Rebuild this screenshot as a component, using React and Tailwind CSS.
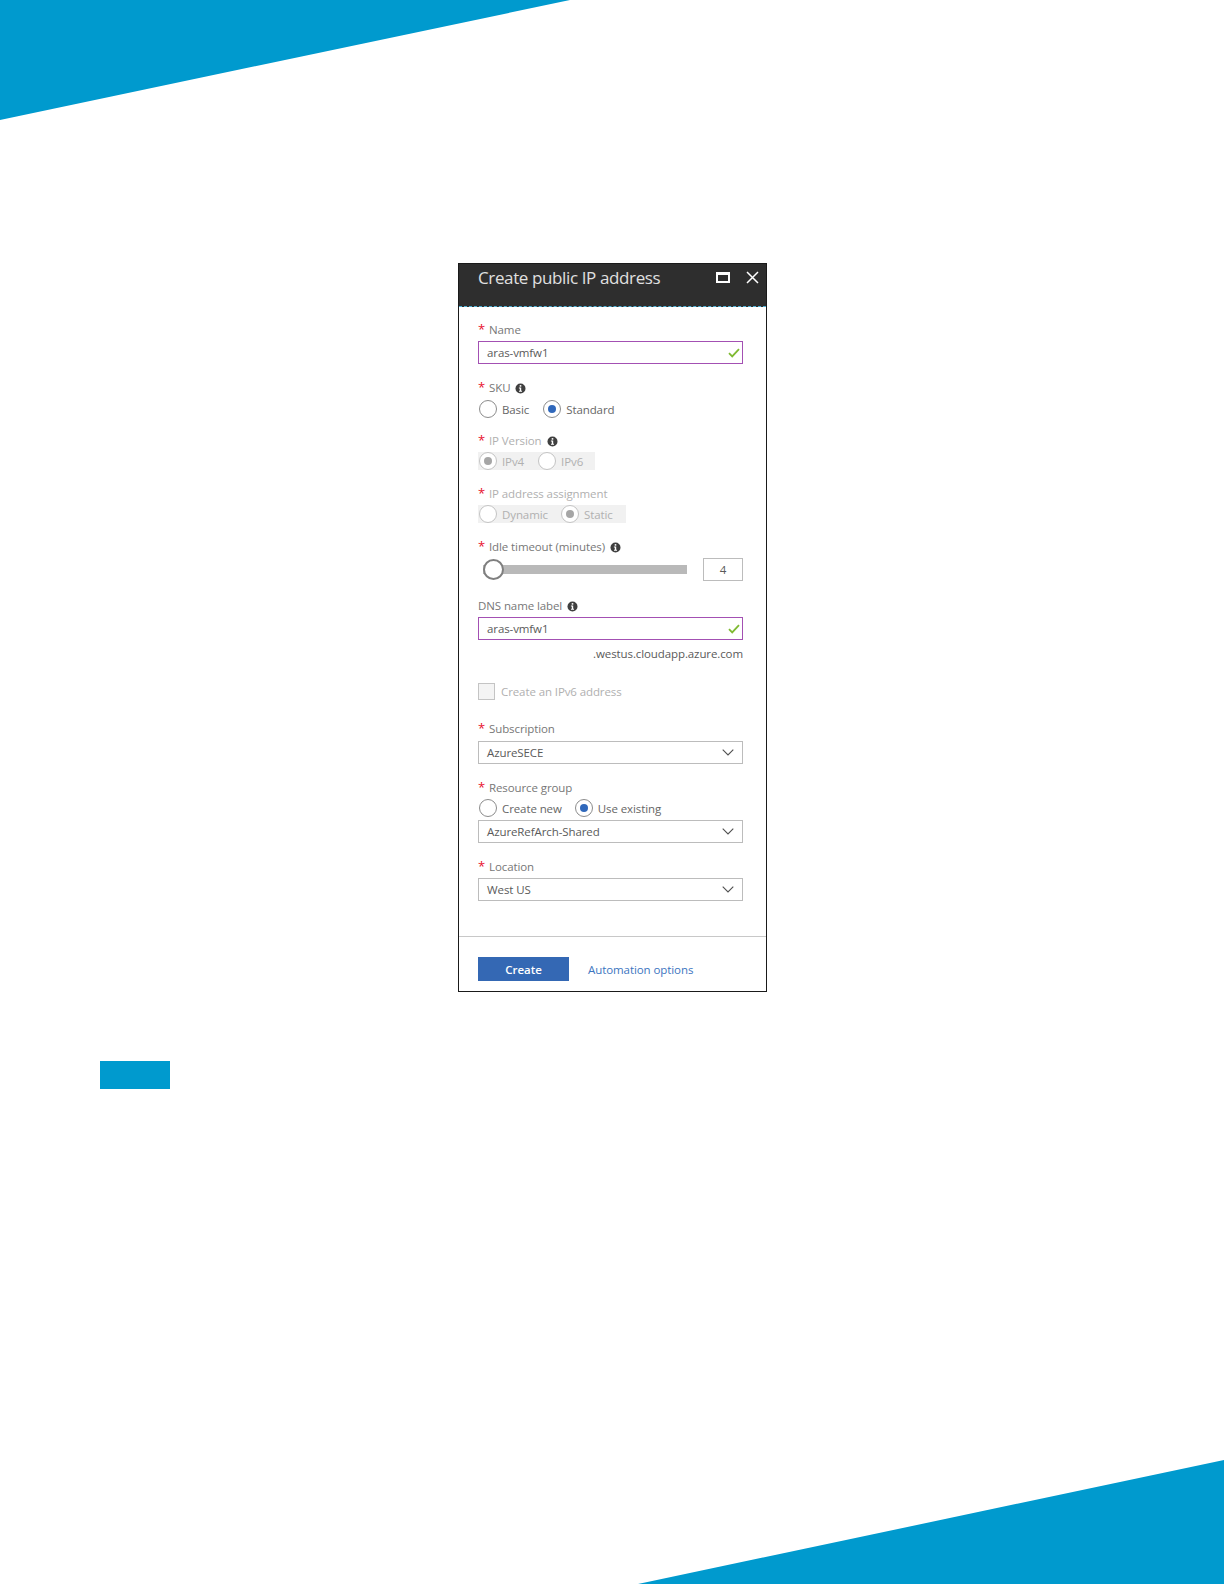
const font = { fontFamily: '"Open Sans", "Noto Sans", sans-serif' };

function Info({ className = "" }) {
  return (
    <svg width="11" height="11" viewBox="0 0 11 11" className={`shrink-0 ${className}`}>
      <circle cx="5.5" cy="5.5" r="5" fill="#3f3f3f" />
      <rect x="4.7" y="2.1" width="1.6" height="1.6" fill="#fff" />
      <path d="M3.9 4.6H6.2V7.8H7V8.8H4V7.8H4.8V5.6H3.9Z" fill="#fff" />
    </svg>
  );
}

function Label({ text, required = true, info = false, disabled = false }) {
  return (
    <div className={`flex h-4 items-center text-[11.5px] leading-4 ${disabled ? "text-[#b0b0b0]" : "text-[#777777]"}`}>
      {required && <span className="relative -top-[1px] w-[11px] text-[13px] leading-4 text-[#e8112d]">*</span>}
      <span className="tracking-[-0.1px]">{text}</span>
      {info && <Info className="ml-[5px]" />}
    </div>
  );
}

function Radio({ checked, disabled }) {
  const dot = disabled ? "bg-[#a6a6a6]" : "bg-[#3068bb]";
  return (
    <span className={`flex h-[18px] w-[18px] shrink-0 items-center justify-center rounded-full border bg-white ${disabled ? "border-[#c4c4c4]" : "border-[#8c8c8c]"}`}>
      {checked && <span className={`h-[8px] w-[8px] rounded-full ${dot}`} />}
    </span>
  );
}

function Option({ label, checked, disabled, className = "" }) {
  return (
    <div className={`flex items-center gap-[5px] text-[11.5px] ${disabled ? "text-[#b0b0b0]" : "text-[#666666]"} ${className}`}>
      <Radio checked={checked} disabled={disabled} />
      <span className="relative top-px tracking-[-0.1px]">{label}</span>
    </div>
  );
}

function Check() {
  return (
    <svg width="12" height="10" viewBox="0 0 12 10" className="shrink-0">
      <path d="M1 5.2L4.2 8.4L11 1.2" fill="none" stroke="#7fba32" strokeWidth="1.8" />
    </svg>
  );
}

function ValidInput({ value, className = "" }) {
  return (
    <div className={`flex h-[23px] w-[265px] items-center justify-between border border-[#a350b3] pl-2 pr-[2px] text-[11.5px] text-[#5a5a5a] ${className}`}>
      <span className="tracking-[-0.1px]">{value}</span>
      <Check />
    </div>
  );
}

function Select({ value, className = "" }) {
  return (
    <div className={`flex h-[23px] w-[265px] items-center justify-between border border-[#bcbcbc] pl-2 pr-[8px] text-[11.5px] text-[#5a5a5a] ${className}`}>
      <span className="tracking-[-0.1px]">{value}</span>
      <svg width="12" height="7" viewBox="0 0 12 7">
        <path d="M0.7 0.7L6 6L11.3 0.7" fill="none" stroke="#505050" strokeWidth="1.1" />
      </svg>
    </div>
  );
}

export default function App() {
  return (
    <div className="relative h-[1584px] w-[1224px] overflow-hidden bg-white" style={font}>
      <div className="absolute left-0 top-0 h-[120px] w-[570px] bg-[#009ace] [clip-path:polygon(0_0,100%_0,0_100%)]" />
      <div className="absolute bottom-0 right-0 h-[124px] w-[586px] bg-[#009ace] [clip-path:polygon(100%_0,100%_100%,0_100%)]" />

      <div className="pl-[458px] pt-[263px]">
        <div className="flex w-[309px] flex-col border border-[#1a1a1a] bg-white">
          <div className="flex h-[43px] items-start justify-between border-b border-dashed border-b-[#4fb3d9] bg-[#2e2e2e] pl-[19px] pr-[7px]">
            <span className="mt-[2px] text-[17px] leading-6 tracking-[-0.38px] text-[#e0e0e0]">Create public IP address</span>
            <div className="mt-[7px] flex items-center gap-[16px]">
              <span className="h-[11px] w-[14px] border-[2px] border-t-[3px] border-white" />
              <svg width="13" height="13" viewBox="0 0 13 13">
                <path d="M1 1L12 12M12 1L1 12" stroke="#fff" strokeWidth="1.5" />
              </svg>
            </div>
          </div>

          <div className="flex flex-col px-[19px] pt-[15px]">
            <Label text="Name" />
            <ValidInput value="aras-vmfw1" className="mt-[3px]" />

            <div className="mt-[16px]"><Label text="SKU" info /></div>
            <div className="mt-[3px] flex h-[19px] items-center pl-px">
              <Option label="Basic" />
              <Option label="Standard" checked className="ml-[14px]" />
            </div>

            <div className="mt-[15px]"><Label text="IP Version" info disabled /></div>
            <div className="mt-[3px] flex h-[18px] w-[117px] items-center bg-[#f1f1f1] pl-px">
              <Option label="IPv4" checked disabled />
              <Option label="IPv6" disabled className="ml-[14px]" />
            </div>

            <div className="mt-[16px]"><Label text="IP address assignment" disabled /></div>
            <div className="mt-[3px] flex h-[18px] w-[148px] items-center bg-[#f1f1f1] pl-px">
              <Option label="Dynamic" disabled />
              <Option label="Static" checked disabled className="ml-[13px]" />
            </div>

            <div className="mt-[16px]"><Label text="Idle timeout (minutes)" info /></div>
            <div className="mt-[3px] flex h-[23px] items-center">
              <div className="relative ml-[5px] h-[9px] w-[204px] bg-[#b9b9b9]">
                <span className="absolute -top-[6px] left-0 h-[21px] w-[21px] rounded-full border-2 border-[#7f7f7f] bg-white" />
              </div>
              <div className="ml-[16px] flex h-[23px] w-10 items-center justify-center border border-[#bcbcbc] text-[11.5px] text-[#5a5a5a]">4</div>
            </div>

            <div className="mt-[17px]"><Label text="DNS name label" required={false} info /></div>
            <ValidInput value="aras-vmfw1" className="mt-[3px]" />
            <div className="mt-[6px] h-4 w-[265px] text-right text-[11.5px] leading-4 tracking-[-0.1px] text-[#5a5a5a]">.westus.cloudapp.azure.com</div>

            <div className="mt-[21px] flex h-[17px] items-center gap-[6px] text-[11.5px] text-[#b0b0b0]">
              <span className="h-[17px] w-[17px] border border-[#c4c4c4] bg-[#f4f4f4]" />
              <span className="tracking-[-0.1px]">Create an IPv6 address</span>
            </div>

            <div className="mt-[21px]"><Label text="Subscription" /></div>
            <Select value="AzureSECE" className="mt-[4px]" />

            <div className="mt-[16px]"><Label text="Resource group" /></div>
            <div className="mt-[2px] flex h-5 items-center pl-px">
              <Option label="Create new" />
              <Option label="Use existing" checked className="ml-[13px]" />
            </div>
            <Select value="AzureRefArch-Shared" className="mt-[2px]" />

            <div className="mt-[16px]"><Label text="Location" /></div>
            <Select value="West US" className="mt-[3px]" />
          </div>

          <div className="mt-[35px] border-t border-[#c8c8c8] px-[19px] pb-[10px] pt-[20px]">
            <div className="flex items-center">
              <div className="flex h-[24px] w-[91px] items-center justify-center bg-[#3468b4] pt-px text-[11.5px] font-semibold text-white">Create</div>
              <span className="relative top-px ml-[19px] text-[11.5px] tracking-[-0.08px] text-[#3c75c0]">Automation options</span>
            </div>
          </div>
        </div>

        <div className="-ml-[358px] mt-[69px] h-[28px] w-[70px] bg-[#009ace]" />
      </div>
    </div>
  );
}
